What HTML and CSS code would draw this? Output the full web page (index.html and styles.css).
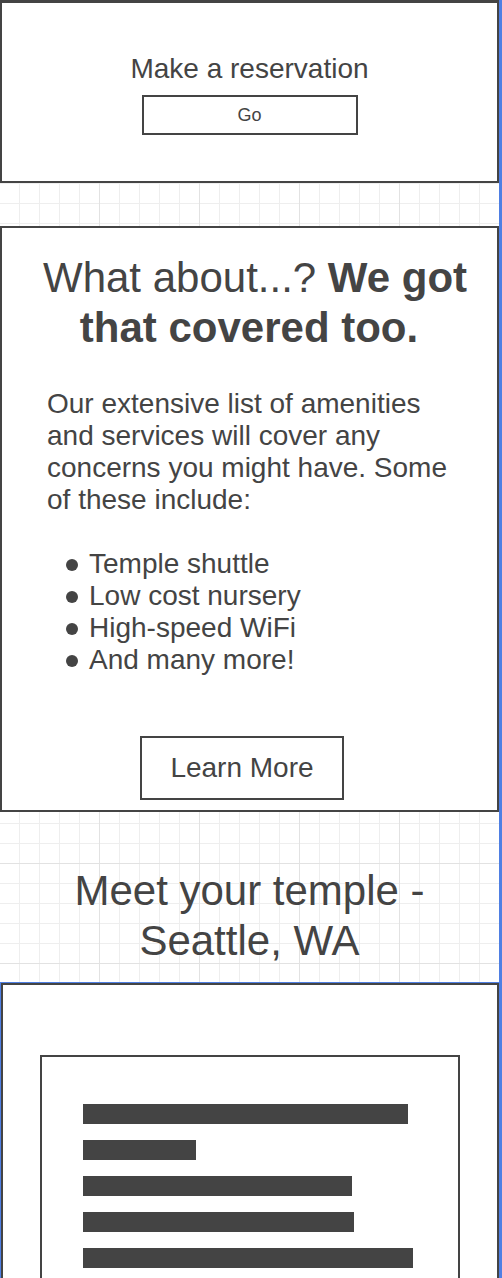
FILE: index.html
```html
<!DOCTYPE html>
<html lang="en">
<head>
<meta charset="utf-8">
<title>Temple wireframe</title>
<link rel="stylesheet" href="styles.css">
</head>
<body>
<div class="page">
  <section class="card reserve">
    <p class="reserve-title">Make a reservation</p>
    <button class="btn btn-go" type="button">Go</button>
  </section>

  <section class="card amenities">
    <h2 class="about-title"><span class="about-line">What about...? <strong>We got</strong></span> <strong>that covered too.</strong></h2>
    <p class="about-text">Our extensive list of amenities and services will cover any concerns you might have. Some of these include:</p>
    <ul class="about-list">
      <li>Temple shuttle</li>
      <li>Low cost nursery</li>
      <li>High-speed WiFi</li>
      <li>And many more!</li>
    </ul>
    <button class="btn btn-learn" type="button">Learn More</button>
  </section>

  <section class="meet">
    <h2 class="meet-title">Meet your temple - Seattle, WA</h2>
  </section>

  <section class="selected">
    <div class="card temple">
      <div class="placeholder">
        <span class="bar bar-1"></span>
        <span class="bar bar-2"></span>
        <span class="bar bar-3"></span>
        <span class="bar bar-4"></span>
        <span class="bar bar-5"></span>
      </div>
    </div>
  </section>
</div>
</body>
</html>
```

FILE: styles.css
```css
* {
  box-sizing: border-box;
}

html, body {
  margin: 0;
  padding: 0;
}

body {
  font-family: "Liberation Sans", Arial, sans-serif;
  color: #444444;
  background-color: #ffffff;
  background-image:
    linear-gradient(to right, #e2e2e2 1px, transparent 1px),
    linear-gradient(to bottom, #e2e2e2 1px, transparent 1px),
    linear-gradient(to right, #eeeeee 1px, transparent 1px),
    linear-gradient(to bottom, #eeeeee 1px, transparent 1px);
  background-size: 100px 100px, 100px 100px, 20px 20px, 20px 20px;
  background-position: 99px 63px, 99px 63px, 19px 3px, 19px 3px;
}

.page {
  width: 502px;
  min-height: 1278px;
  display: flex;
  flex-direction: column;
  border-right: 3px solid #4f7fe3;
}

.card {
  background: #ffffff;
  border: 2px solid #444444;
}

/* Reservation card */
.reserve {
  border-top-width: 3px;
  height: 183px;
  padding-top: 50px;
  display: flex;
  flex-direction: column;
  align-items: center;
}

.reserve-title {
  margin: 0;
  font-size: 28px;
  line-height: 32px;
}

.btn {
  font-family: "Liberation Sans", Arial, sans-serif;
  color: #444444;
  background: #ffffff;
  border: 2px solid #444444;
  border-radius: 0;
  padding: 0;
  cursor: pointer;
}

.btn-go {
  margin-top: 10px;
  width: 216px;
  height: 40px;
  font-size: 18px;
  line-height: 20px;
}

/* Amenities card */
.amenities {
  margin-top: 43px;
  height: 586px;
  padding-top: 25px;
}

.about-title {
  margin: 0 0 0 41px;
  width: 412px;
  text-align: center;
  font-size: 42px;
  line-height: 50px;
  font-weight: normal;
}

.about-title strong {
  font-weight: bold;
}

.about-line {
  white-space: nowrap;
}

.about-text {
  margin: 35px 0 0 45px;
  width: 410px;
  font-size: 28px;
  line-height: 32px;
}

.about-list {
  list-style: none;
  margin: 32px 0 0 64px;
  padding: 0;
  font-size: 28px;
  line-height: 32px;
}

.about-list li {
  display: flex;
  align-items: center;
  gap: 11px;
}

.about-list li::before {
  content: "";
  flex: none;
  width: 12px;
  height: 12px;
  margin-top: 1px;
  border-radius: 50%;
  background: #444444;
}

.btn-learn {
  display: block;
  margin: 60px 0 0 138px;
  width: 204px;
  height: 64px;
  font-size: 28px;
  line-height: 32px;
}

/* Meet your temple */
.meet {
  height: 170px;
  padding: 54px 30px 0;
}

.meet-title {
  margin: 0;
  text-align: center;
  font-size: 42px;
  line-height: 50px;
  font-weight: normal;
}

/* Selected temple card */
.selected {
  border-top: 1px solid #4f7fe3;
  border-left: 1px solid #4f7fe3;
  flex: 1;
  display: flex;
  flex-direction: column;
}

.temple {
  flex: 1;
  padding: 70px 0 40px 37px;
}

.placeholder {
  width: 420px;
  border: 2px solid #444444;
  padding: 47px 0 40px 41px;
  display: flex;
  flex-direction: column;
  gap: 16px;
}

.bar {
  display: block;
  height: 20px;
  background: #444444;
}

.bar-1 { width: 325px; }
.bar-2 { width: 113px; }
.bar-3 { width: 269px; }
.bar-4 { width: 271px; }
.bar-5 { width: 330px; }
```
